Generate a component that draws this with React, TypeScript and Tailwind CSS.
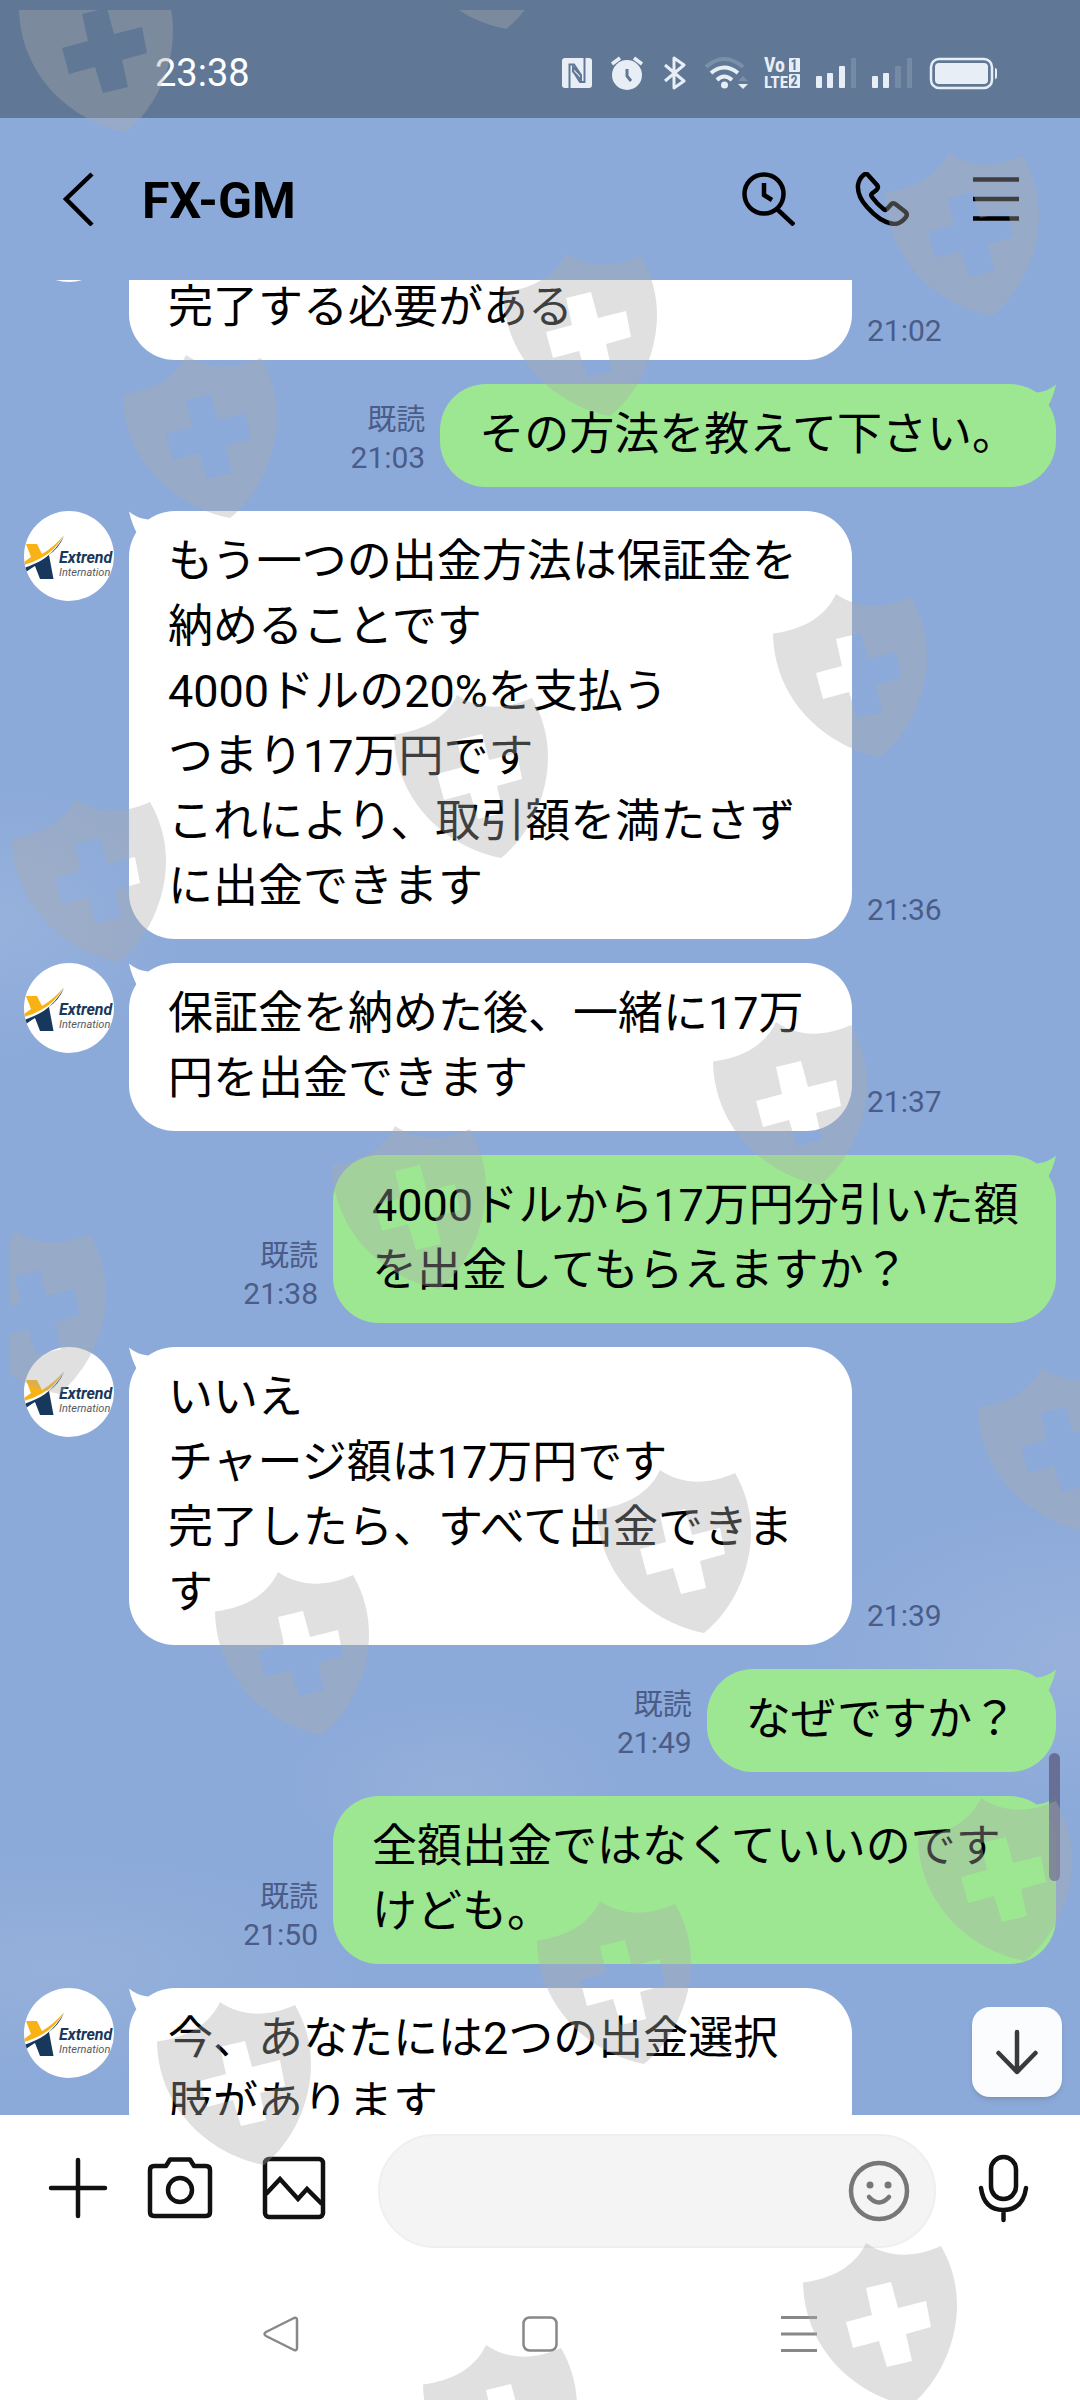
import { useState } from 'react'
import type { ReactNode } from 'react'
import clsx from 'clsx'

interface Message {
  id: number
  mine: boolean
  text: string
  time: string
}

const messages: Message[] = [
  { id: 1, mine: false, text: '\n完了する必要がある', time: '21:02' },
  { id: 2, mine: true, text: 'その方法を教えて下さい。', time: '21:03' },
  {
    id: 3,
    mine: false,
    text: 'もう一つの出金方法は保証金を\n納めることです\n4000ドルの20%を支払う\nつまり17万円です\nこれにより、取引額を満たさず\nに出金できます',
    time: '21:36',
  },
  { id: 4, mine: false, text: '保証金を納めた後、一緒に17万\n円を出金できます', time: '21:37' },
  { id: 5, mine: true, text: '4000ドルから17万円分引いた額\nを出金してもらえますか？', time: '21:38' },
  { id: 6, mine: false, text: 'いいえ\nチャージ額は17万円です\n完了したら、すべて出金できま\nす', time: '21:39' },
  { id: 7, mine: true, text: 'なぜですか？', time: '21:49' },
  { id: 8, mine: true, text: '全額出金ではなくていいのです\nけども。', time: '21:50' },
  { id: 9, mine: false, text: '今、あなたには2つの出金選択\n肢があります', time: '' },
]

// Position of the top left spike of every shield
const shields = [
  [82, -31], [462, -134], [948, 153], [566, 253], [186, 355], [836, 594], [457, 695],
  [75, 799], [776, 1022], [395, 1126], [15, 1231], [1041, 1368], [660, 1470], [278, 1572],
  [981, 1798], [600, 1901], [220, 2002], [866, 2243], [486, 2345],
]

function Shields() {
  return (
    <svg className="pointer-events-none absolute inset-0 h-full w-full" aria-hidden="true">
      <defs>
        <clipPath id="frame">
          <rect x="10" y="10" width="100%" height="100%" />
        </clipPath>
        <path
          id="shield"
          fillRule="evenodd"
          d="M-63 39.500C-35 36-11 24 0 0C22 15 48 15 75 3C86 22 91 42 91 62C91 100 73 140 44 163C-12 152-62 105-63 39.500ZM0 45L6 72L-20 79L-13 105L13 98L21 124L46 118L40 91L65 84L60 58L32 65L25 39Z"
        />
      </defs>
      <g clipPath="url(#frame)" fill="#aaaaaa" fillOpacity="0.37">
        {shields.map(([x, y]) => (
          <use key={`${x}-${y}`} href="#shield" x={x} y={y} />
        ))}
      </g>
    </svg>
  )
}

function SignalBars({ level }: { level: number }) {
  const tops = [20, 17, 10, 2]
  return (
    <svg width="40" height="34" fill="#e8eef6">
      {tops.map((top, i) => (
        <rect key={top} x={i * 12 - (i > 0 ? 1 : 0)} y={top} width="6" height={32 - top} rx="1" opacity={i < level ? 1 : 0.16} />
      ))}
    </svg>
  )
}

function StatusBar() {
  return (
    <div className="flex h-[118px] shrink-0 items-center justify-between bg-[#607896] pt-7 pr-[82px] pl-[155px]">
      <span className="text-[38px] leading-[44px] text-white">23:38</span>
      <div className="flex items-center gap-4">
        <svg width="34" height="34">
          <rect x="2" y="2" width="30" height="30" rx="3" fill="#e8eef6" />
          <path d="M9.500 32V8.500L14 8.500L21 19V24L12.500 15M24.500 2V26L20 26L13 15V11L21.500 20" fill="none" stroke="#607896" strokeWidth="2" />
        </svg>
        <svg width="34" height="34" fill="none">
          <circle cx="17" cy="19" r="15" fill="#e8eef6" />
          <path d="M17 13V20L21 25" stroke="#607896" strokeWidth="3" />
          <path d="M2 8L10 2M32 8L24 2" stroke="#e8eef6" strokeWidth="3.500" />
        </svg>
        <svg width="28" height="34" fill="none" stroke="#e8eef6" strokeWidth="3" strokeLinejoin="round">
          <path d="M5 9L24 25L14 32V2L24 9L5 25" />
        </svg>
        <svg width="44" height="34" fill="none" stroke="#e8eef6" strokeWidth="4">
          <path d="M2 11Q20-5 39 11" opacity="0.2" />
          <path d="M7 17Q20 6 34 17" />
          <path d="M13 24Q20 17 28 24" />
          <circle cx="20.500" cy="29" r="3.500" fill="#e8eef6" stroke="none" />
          <path d="M34 28H44L39 33Z" fill="#e8eef6" stroke="none" />
          <path d="M34 25H44L39 20Z" fill="#e8eef6" stroke="none" opacity="0.2" />
        </svg>
        <svg
          width="36"
          height="34"
          className="overflow-visible"
          fill="#e8eef6"
          fontWeight="700"
          fontFamily="'Liberation Sans Narrow', 'Roboto Condensed', Roboto, sans-serif"
        >
          <text x="0" y="16" fontSize="20">Vo</text>
          <text x="0" y="32" fontSize="17">LTE</text>
          <rect x="25" y="2" width="11" height="14" rx="1" />
          <rect x="25" y="18" width="11" height="14" rx="1" />
          <g fill="#607896" fontSize="14" textAnchor="middle">
            <text x="30" y="14">1</text>
            <text x="30" y="30">2</text>
          </g>
        </svg>
        <SignalBars level={3} />
        <SignalBars level={2} />
        <svg width="70" height="34">
          <rect x="3" y="3" width="61" height="29" rx="8" fill="none" stroke="#e8eef6" strokeWidth="2.500" />
          <rect x="7" y="7" width="53" height="21" rx="4" fill="#e8eef6" />
          <path d="M67 12Q69 12 69 15V20Q69 23 67 23Z" fill="#e8eef6" />
        </svg>
      </div>
    </div>
  )
}

function Header() {
  return (
    <header className="flex h-[162px] shrink-0 items-center bg-[#8caad9] pr-[57px] pl-[52px]">
      <button type="button" aria-label="戻る">
        <svg width="54" height="54" fill="none" stroke="#000" strokeWidth="4.500">
          <path d="M40 2L14 27L40 53" />
        </svg>
      </button>
      <h1 className="mt-1 ml-9 text-[50px] leading-[58px] font-bold text-black">FX-GM</h1>
      <div className="ml-auto flex gap-[60px]">
        <button type="button" aria-label="検索">
          <svg width="54" height="54" fill="none" stroke="#000" strokeWidth="4.500">
            <circle cx="23" cy="22" r="19.500" />
            <path d="M36 37L53 53" />
            <path d="M23 11V23L31 28" />
          </svg>
        </button>
        <button type="button" aria-label="通話">
          <svg width="54" height="54" fill="none" stroke="#000" strokeWidth="4.500" strokeLinejoin="round">
            <path d="M13 3L22 13Q24 15.500 21.500 18L17 21.500Q15.500 23 17 25Q22 32 29 37.500Q30.500 38.500 32 37L36 32.500Q38 30 41 32.500L50 39.500Q53 42 51 45Q46 52 39 52Q26 51 12 35Q2 24 3 13Q4 7 8.500 3Q11 1 13 3Z" />
          </svg>
        </button>
        <button type="button" aria-label="メニュー">
          <svg width="54" height="54" fill="none" stroke="#000" strokeWidth="4.500">
            <path d="M4 7.500H50M4 27H50M4 46.500H50" />
          </svg>
        </button>
      </div>
    </header>
  )
}

function Avatar() {
  return (
    <svg width="90" height="90" className="shrink-0 rounded-full bg-white" role="img" aria-label="Extrend International">
      <path d="M2 33H13L18 43Q30 36 40 24Q31 40 17 47Q8 52 0 54V51L7 46Z" fill="#f8b216" />
      <path d="M40 25Q35 37 25 44L29.500 68H16L11 55Q6 58 2 61L0 57Q14 52 21 47Q32 39 40 25Z" fill="#17385c" />
      <g fontStyle="italic">
        <text x="35" y="52" fontSize="16" fontWeight="700" fill="#17385c">
          Extrend
        </text>
        <text x="35" y="65" fontSize="11" fill="#55595f">
          Internation
        </text>
      </g>
    </svg>
  )
}

function Tail({ mine }: { mine: boolean }) {
  return (
    <svg
      width="30"
      height="30"
      className={clsx('absolute top-0', mine ? 'right-0 fill-[#9de793]' : 'left-0 fill-white')}
    >
      {mine ? (
        <path d="M30 0.500Q23 7 11 8.500L8 20L21 24Q27 14 30 0.500Z" />
      ) : (
        <path d="M0 0.500Q7 7 19 8.500L22 20L9 24Q3 14 0 0.500Z" />
      )}
    </svg>
  )
}

function MessageRow({ message }: { message: Message }) {
  const { mine, text, time } = message
  // Wrapped messages take the full bubble width
  const wide = !mine || text.includes('\n')

  return (
    <li className={clsx('flex', mine ? 'flex-row-reverse' : 'flex-row')}>
      {!mine && <Avatar />}
      <div
        className={clsx(
          'relative rounded-[46px] px-[39px] pt-[18px] pb-5 text-[45px] leading-[65px] whitespace-pre text-black',
          wide && 'w-[723px]',
          mine ? 'bg-[#9de793]' : 'ml-[15px] bg-white'
        )}
      >
        <Tail mine={mine} />
        {text}
      </div>
      <div
        className={clsx(
          'flex flex-col self-end pb-[10px] text-[30px] leading-[38px] text-[#4a5c87]',
          mine ? 'mr-[15px] items-end' : 'ml-[15px]'
        )}
      >
        {mine && <span className="text-[29px]">既読</span>}
        <span>{time}</span>
      </div>
    </li>
  )
}

function IconButton({ label, className, children }: { label: string; className?: string; children: ReactNode }) {
  return (
    <button type="button" aria-label={label} className={className}>
      <svg
        width="66"
        height="66"
        className="overflow-visible"
        fill="none"
        stroke="#111"
        strokeWidth="4.500"
        strokeLinecap="round"
        strokeLinejoin="round"
      >
        {children}
      </svg>
    </button>
  )
}

function Composer() {
  const [draft, setDraft] = useState('')

  return (
    <form className="flex shrink-0 items-center bg-white pt-[19px] pr-[42px] pl-[45px]" onSubmit={(e) => e.preventDefault()}>
      <IconButton label="追加" className="mr-9">
        <path d="M33 2V58M6 30H60" />
      </IconButton>
      <IconButton label="カメラ" className="mr-12">
        <path d="M7 8H19L23 1.500H43L47 8H59Q63 8 63 12V54Q63 58 59 58H7Q3 58 3 54V12Q3 8 7 8Z" />
        <circle cx="33" cy="32" r="12" />
      </IconButton>
      <IconButton label="写真" className="mr-[51px]">
        <rect x="4" y="1" width="58" height="58" rx="4" />
        <path d="M5 36L19 21L37 41L46 31L61 46" strokeLinecap="butt" strokeLinejoin="miter" />
      </IconButton>
      <div className="flex h-[114px] min-w-0 flex-1 items-center rounded-full border-2 border-[#efefef] bg-[#f4f4f4] pr-6 pl-10">
        <input
          type="text"
          aria-label="メッセージを入力"
          value={draft}
          onChange={(e) => setDraft(e.target.value)}
          className="min-w-0 flex-1 bg-transparent text-[45px] outline-none"
        />
        <button type="button" aria-label="スタンプ">
          <svg width="62" height="62" fill="none" stroke="#777" strokeWidth="4.500" strokeLinecap="round">
            <circle cx="31" cy="31" r="28" />
            <path d="M21 37Q31 48 41 37" />
            <circle cx="22" cy="25" r="3.500" fill="#777" stroke="none" />
            <circle cx="40" cy="25" r="3.500" fill="#777" stroke="none" />
          </svg>
        </button>
      </div>
      <IconButton label="音声" className="ml-9">
        <rect x="19" y="-1" width="25" height="42" rx="12.500" />
        <path d="M9 30Q12 52 31.500 52Q51 52 54 30M31.500 52V62" />
      </IconButton>
    </form>
  )
}

function NavigationBar() {
  return (
    <nav className="grid h-[152px] shrink-0 grid-cols-3 items-center justify-items-center bg-white px-[152px] pt-5">
      <button type="button" aria-label="戻るキー">
        <svg width="36" height="36" fill="none" stroke="#888" strokeWidth="2.500" strokeLinejoin="round">
          <path d="M3 16L31 2Q34 1 34 4V32Q34 35 31 34L3 20Q0 18 3 16Z" />
        </svg>
      </button>
      <button type="button" aria-label="ホーム">
        <svg width="36" height="36" fill="none" stroke="#888" strokeWidth="2.500">
          <rect x="1.500" y="1.500" width="33" height="33" rx="6" />
        </svg>
      </button>
      <button type="button" aria-label="履歴">
        <svg width="36" height="36" fill="none" stroke="#888" strokeWidth="3">
          <path d="M0 1.500H36M0 18H36M0 34.500H36" />
        </svg>
      </button>
    </nav>
  )
}

export default function App() {
  return (
    <div className="relative flex h-screen flex-col overflow-hidden bg-white font-['Roboto','Noto_Sans_CJK_JP',sans-serif]">
      <StatusBar />
      <Header />
      <main className="relative min-h-0 flex-1 overflow-hidden bg-[#8caad9]">
        {/* Faint clouds */}
        <div className="absolute inset-0 bg-[radial-gradient(ellipse_180px_130px_at_0%_35%,#97b1dc,transparent),radial-gradient(ellipse_260px_150px_at_100%_75%,#98b1dc,transparent),radial-gradient(ellipse_300px_110px_at_5%_92%,#95b0da,transparent),radial-gradient(ellipse_160px_80px_at_42%_82%,#95afda,transparent)]" />
        {/* The list is scrolled, so the oldest message is cut by the header */}
        <ul className="relative -mt-[88px] flex flex-col gap-6 px-6">
          {messages.map((message) => (
            <MessageRow key={message.id} message={message} />
          ))}
        </ul>
        <div className="absolute top-[1473px] right-5 h-32 w-[11px] rounded-full bg-[#63698c]/90" />
        <button
          type="button"
          aria-label="最新のメッセージへ"
          className="absolute right-[18px] bottom-[18px] rounded-[18px] bg-[#fbfcfd] shadow-md"
        >
          <svg width="90" height="90" fill="none" stroke="#3a3a3a" strokeWidth="4.500" strokeLinecap="round" strokeLinejoin="round">
            <path d="M45 25V65M26.500 46L45 65L63.500 46" />
          </svg>
        </button>
      </main>
      <Composer />
      <NavigationBar />
      <Shields />
    </div>
  )
}
